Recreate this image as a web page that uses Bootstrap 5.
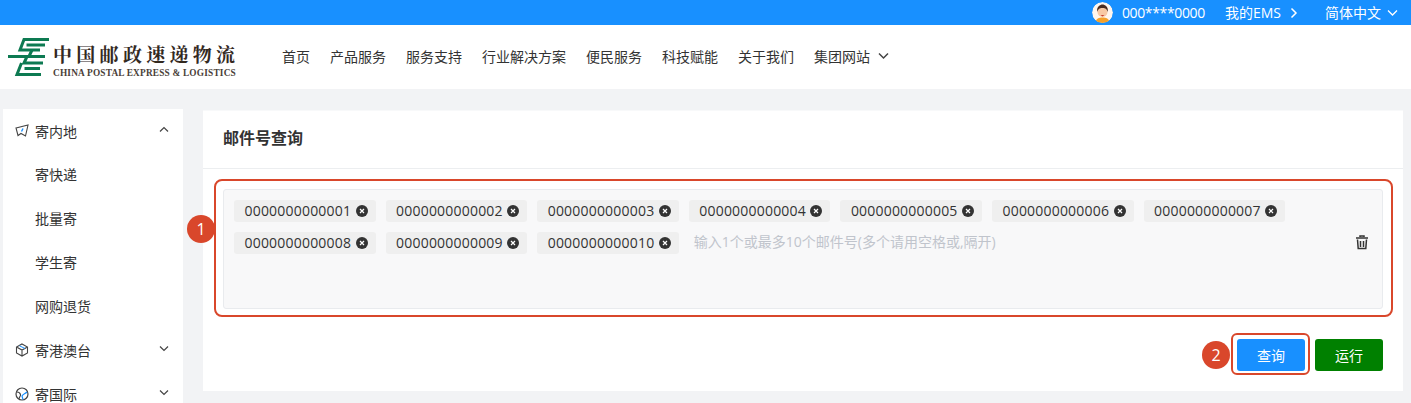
<!DOCTYPE html>
<html lang="zh-CN"><head><meta charset="utf-8"><title>邮件号查询</title>
<link href="https://cdn.jsdelivr.net/npm/bootstrap@5.3.0/dist/css/bootstrap.min.css" rel="stylesheet">
<style>
html,body{height:403px;overflow:hidden}
body{background:#f2f3f5;font-family:"Open Sans","Noto Sans CJK SC",sans-serif;font-size:14px;color:#333}
.topstrip{height:25px;background:#1890ff;color:#fff;padding-right:13px;gap:20px}
.topstrip span{white-space:nowrap}
.topstrip svg.chev{margin-left:9px}
.avatar{width:21px;height:21px;border-radius:50%;margin-right:9px}
.phone{letter-spacing:-.35px}
.langpick{margin-left:7px}
.hdr{height:64px;background:#fff;padding-left:8px}
.logo-wrap{width:274px;flex:none}
.logo-text{padding-top:8px}
.logo-cn{font-family:"Noto Serif CJK SC","Noto Sans CJK SC",sans-serif;font-size:19px;line-height:22px;letter-spacing:4.3px;color:#33291f;font-weight:700;white-space:nowrap}
.logo-en{font-family:"Liberation Serif",serif;font-weight:700;font-size:9.3px;line-height:11px;margin-top:3px;color:#4a4038;white-space:nowrap;letter-spacing:.2px}
.mainnav{gap:20px;padding-bottom:2px}
.mainnav a{color:#333;text-decoration:none;white-space:nowrap}
.pagebody{padding:20px 8px 0 3px;gap:20px}
.sidecol{width:180px;background:#fff;height:300px;overflow:hidden;flex:none}
.sidehead,.sidesub{height:44px;padding-left:32px;white-space:nowrap;position:relative}
.sidehead{padding-right:14px}
.sidefirst{margin-bottom:-1px}
.sideico{position:absolute;left:12px;top:15px}
.panelbox{flex:1;height:281px;margin-top:1px;background:#fff;border:1px solid #f8f9fa;border-width:1px 0 0}
.paneltitle{height:58px;border-bottom:1px solid #eceef0;padding-left:20px;padding-bottom:3px;font-size:16px;font-weight:700;color:#333}
.fieldwrap{position:relative;margin:20px 20px 0;height:120px;background:#f8f8f9;border:1px solid #e9ebee;border-radius:3px;padding:10px 10px 0 10px}
.ring1{position:absolute;left:-10px;top:-11px;right:-11px;bottom:-9px;border:2px solid #d9472b;border-radius:8px;pointer-events:none}
.numdot{position:absolute;width:28px;height:28px;border-radius:50%;background:#d9472b;color:#fff;font-size:16px;line-height:28px;text-align:center}
.dot1{left:-37px;top:25px}
.tagline{display:flex;flex-wrap:wrap;gap:10px;align-content:flex-start}
.chip{height:22px;width:141.6px;background:#efefef;border-radius:3px;padding:0 0 2px 10.5px;gap:4.500px;white-space:nowrap;color:#333;letter-spacing:.2px}
.chipx{flex:none;margin-top:2px}
.hint{color:#c0c4cc;font-size:14px;margin-left:5px;line-height:20px;white-space:nowrap}
.trash{position:absolute;right:13px;top:45px}
.actions{padding:30px 20px 0 0;gap:10px;position:relative}
.actbtn{width:68px;height:32px;border:0;border-radius:3px;color:#fff;font-size:14px;padding:0;display:flex;align-items:center;justify-content:center}
.actblue{background:#1890ff}.actgreen{background:#008000}
.btnholder{position:relative}
.ring2{position:absolute;left:-6px;top:-6px;right:-5px;bottom:-4px;border:2px solid #d9472b;border-radius:6px}
.dot2{left:-35px;top:2px}
</style></head><body>
<div class="topstrip d-flex align-items-center justify-content-end">
 <span class="d-flex align-items-center">
  <svg class="avatar" viewBox="0 0 21 21"><circle cx="10.500" cy="10.500" r="10.500" fill="#fff6ee"/><path d="M3 21c1-4.500 4-5.500 7.500-5.500s6.500 1 7.500 5.500z" fill="#f5a12b"/><circle cx="10.500" cy="10" r="5" fill="#f8c9a4"/><path d="M5.200 10c-.8-5.500 3-7.500 5.300-7.500s6.100 2 5.300 7.500c-1-2.800-2-4-5.300-4s-4.300 1.200-5.300 4z" fill="#4a2c20"/><path d="M8.500 13h4l-2 1.500z" fill="#c9402f"/></svg>
  <span class="phone">000****0000</span></span>
 <span class="d-flex align-items-center">我的EMS<svg class="chev" width="8" height="12" viewBox="0 0 8 12"><path d="M1.500 1.500 6 6l-4.500 4.500" fill="none" stroke="#fff" stroke-width="1.500"/></svg></span>
 <span class="d-flex align-items-center langpick">简体中文<svg class="chev" width="11" height="8" viewBox="0 0 11 8" style="margin-left:6px"><path d="M1 1.500l4.500 4.500L10 1.500" fill="none" stroke="#fff" stroke-width="1.300"/></svg></span>
</div>
<div class="hdr d-flex align-items-center">
 <div class="logo-wrap d-flex align-items-center gap-1">
  <svg width="41" height="39" viewBox="0 0 41 39" fill="none" stroke="#0d7a52" stroke-width="3"><path d="M41 1.500H16L12 12H32"/><path d="M37 7H18.500"/><path d="M0 18.500H21L24 12"/><path d="M37 18.500H20"/><path d="M19 18.500L16 25H35"/><path d="M16.500 30.500H32"/><path d="M33 36.500H9L13.500 25"/></svg>
  <div class="logo-text"><div class="logo-cn">中国邮政速递物流</div><div class="logo-en">CHINA POSTAL EXPRESS &amp; LOGISTICS</div></div>
 </div>
 <nav class="mainnav d-flex align-items-center">
  <a href="#">首页</a><a href="#">产品服务</a><a href="#">服务支持</a><a href="#">行业解决方案</a><a href="#">便民服务</a><a href="#">科技赋能</a><a href="#">关于我们</a>
  <a href="#" class="d-flex align-items-center">集团网站<svg width="11" height="8" viewBox="0 0 11 8" class="ms-2"><path d="M1 1.500l4.500 4.500L10 1.500" fill="none" stroke="#444" stroke-width="1.500"/></svg></a>
 </nav>
</div>
<div class="pagebody d-flex align-items-start">
 <aside class="sidecol">
  <div class="sidehead sidefirst d-flex align-items-center justify-content-between"><svg class="sideico" width="14" height="14" viewBox="0 0 14 14"><path d="M1 4l12-3-2.500 11L6 9.500 3 11.500z" fill="none" stroke="#444" stroke-width="1.100"/><path d="M8 4.500 6.500 7.500" stroke="#1890ff" stroke-width="1.400"/></svg><span>寄内地</span><svg width="10" height="7" viewBox="0 0 10 7" class="mb-1"><path d="M1 5.500l4-4 4 4" fill="none" stroke="#444" stroke-width="1.200"/></svg></div>
  <div class="sidesub d-flex align-items-center">寄快递</div>
  <div class="sidesub d-flex align-items-center">批量寄</div>
  <div class="sidesub d-flex align-items-center">学生寄</div>
  <div class="sidesub d-flex align-items-center">网购退货</div>
  <div class="sidehead d-flex align-items-center justify-content-between"><svg class="sideico" width="14" height="14" viewBox="0 0 14 14"><path d="M7 1l5.500 3v6L7 13l-5.500-3V4z M1.500 4 7 7l5.500-3M7 7v6" fill="none" stroke="#444" stroke-width="1.100"/><path d="M4.500 2.800 10 5.500" stroke="#1890ff" stroke-width="1"/></svg><span>寄港澳台</span><svg width="10" height="7" viewBox="0 0 10 7" class="mb-1"><path d="M1 1.500l4 4 4-4" fill="none" stroke="#444" stroke-width="1.200"/></svg></div>
  <div class="sidehead d-flex align-items-center justify-content-between"><svg class="sideico" width="14" height="14" viewBox="0 0 14 14"><circle cx="7" cy="7" r="6" fill="none" stroke="#444" stroke-width="1.200"/><path d="M2 5c2 0 3 1 3.500 2.500S4 10 4 12" fill="none" stroke="#444" stroke-width="1.100"/><path d="M12 5c-2 2-4 2-5 4l1 3.500" fill="none" stroke="#1890ff" stroke-width="1.200"/></svg><span>寄国际</span><svg width="10" height="7" viewBox="0 0 10 7" class="mb-1"><path d="M1 1.500l4 4 4-4" fill="none" stroke="#444" stroke-width="1.200"/></svg></div>
 </aside>
 <main class="panelbox">
  <div class="paneltitle d-flex align-items-center">邮件号查询</div>
  <div class="fieldwrap">
   <div class="ring1"></div>
   <div class="numdot dot1">1</div>
   <div class="tagline" id="chips"></div>
   <svg class="trash" width="14" height="15" viewBox="0 0 14 15"><path d="M5 2V1h4v1M1 3h12" fill="none" stroke="#333" stroke-width="1.500"/><path d="M2.500 4.500l.7 9h7.600l.7-9M5.500 6v6M8.500 6v6" fill="none" stroke="#333" stroke-width="1.500"/></svg>
  </div>
  <div class="actions d-flex justify-content-end">
   <div class="btnholder"><div class="ring2"></div><div class="numdot dot2">2</div><button class="actbtn actblue position-relative">查询</button></div>
   <button class="actbtn actgreen">运行</button>
  </div>
 </main>
</div>
<script>
var h='';
for(var i=1;i<=10;i++){var n=('0000000000000'+i).slice(-13);
h+='<span class="chip d-inline-flex align-items-center">'+n+'<svg class="chipx" width="12" height="12" viewBox="0 0 12 12"><circle cx="6" cy="6" r="6" fill="#333"/><path d="M4 4l4 4M8 4l-4 4" stroke="#fff" stroke-width="1.200"/></svg></span>';}
h+='<span class="hint">输入1个或最多10个邮件号(多个请用空格或,隔开)</span>';
document.getElementById('chips').innerHTML=h;
</script>
<script src="https://cdn.jsdelivr.net/npm/bootstrap@5.3.0/dist/js/bootstrap.bundle.min.js"></script>
</body></html>
